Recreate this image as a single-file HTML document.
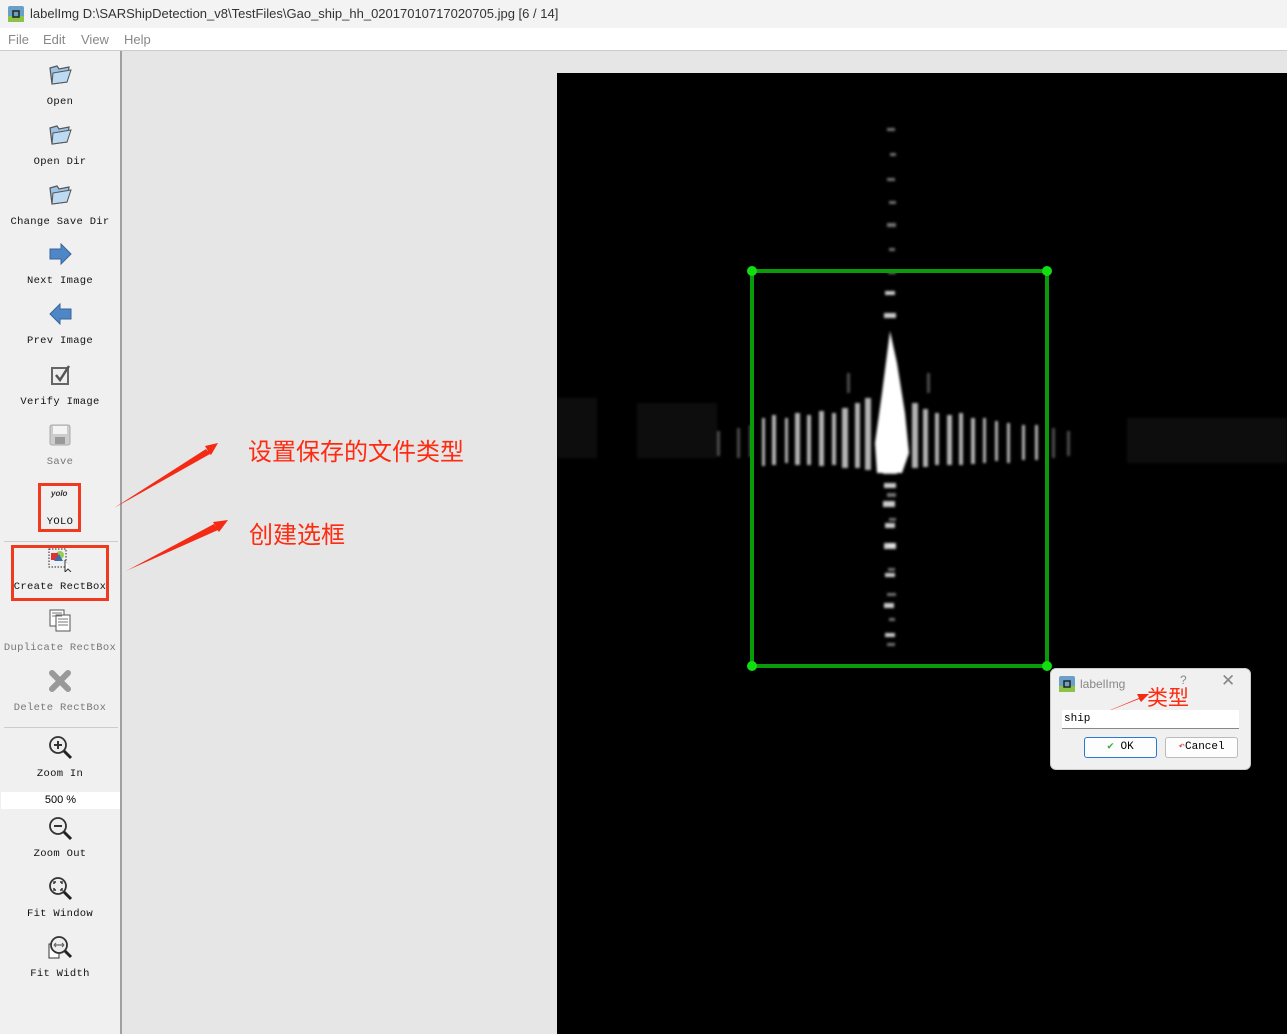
<!DOCTYPE html>
<html><head><meta charset="utf-8"><style>
*{margin:0;padding:0;box-sizing:border-box}
body{width:1287px;height:1034px;overflow:hidden;background:#e6e6e6;font-family:"Liberation Sans",sans-serif;position:relative}
.title{position:absolute;left:0;top:0;width:1287px;height:28px;background:#f3f3f3;font-size:13px;color:#333}
.title span{position:absolute;left:30px;top:6px}
.menu{position:absolute;left:0;top:28px;width:1287px;height:23px;background:#fff;border-bottom:1px solid #ccc;font-size:13px;color:#888}
.menu span{position:absolute;top:4px}
.tb{position:absolute;left:0;top:51px;width:122px;height:983px;background:#f0f0f0;border-right:2px solid #a0a0a0}
.lbl{position:absolute;width:120px;text-align:center;font-family:"Liberation Mono",monospace;font-size:10.5px;color:#111;letter-spacing:0.3px}
.dis{color:#777}
.ic{position:absolute}
.sep{position:absolute;left:4px;width:114px;height:1px;background:#ccc}
.red{position:absolute;border:3px solid #f03a20}
.ann{position:absolute;color:#ff2a10;font-family:"Liberation Sans","Noto Sans CJK SC",sans-serif;font-size:24px}
.img{position:absolute;left:557px;top:73px;width:730px;height:961px;background:#000}
.dlg{position:absolute;left:1050px;top:668px;width:201px;height:102px;background:#f0f0f0;border-radius:6px;border:1px solid #ccc}
.btn{position:absolute;height:21px;font-family:"Liberation Mono",monospace;font-size:11px;background:#fdfdfd;border:1px solid #bbb;border-radius:3px;text-align:center;line-height:19px}
</style></head><body>
<div class="title">
<svg style="position:absolute;left:8px;top:6px" width="16" height="16"><rect x="0" y="0" width="16" height="16" rx="2" fill="#6aa0c8"/><rect x="0" y="10" width="16" height="6" fill="#8bc34a"/><rect x="5" y="5" width="6" height="6" fill="none" stroke="#222" stroke-width="1.5"/></svg>
<span>labelImg D:\SARShipDetection_v8\TestFiles\Gao_ship_hh_02017010717020705.jpg [6 / 14]</span></div>
<div class="menu"><span style="left:8px">File</span><span style="left:43px">Edit</span><span style="left:81px">View</span><span style="left:124px">Help</span></div>
<div class="tb"></div>
<svg class="ic" style="left:47px;top:62px" width="26" height="24"><path d="M3 6 L10 4 L12 7 L22 5 L20 20 L5 22 Z" fill="#9cc3e6" stroke="#555" stroke-width="1.2"/><path d="M6 11 L24 8 L20 20 L5 22Z" fill="#bcdaf2" stroke="#555" stroke-width="1"/></svg>
<svg class="ic" style="left:47px;top:122px" width="26" height="24"><path d="M3 6 L10 4 L12 7 L22 5 L20 20 L5 22 Z" fill="#9cc3e6" stroke="#555" stroke-width="1.2"/><path d="M6 11 L24 8 L20 20 L5 22Z" fill="#bcdaf2" stroke="#555" stroke-width="1"/></svg>
<svg class="ic" style="left:47px;top:182px" width="26" height="24"><path d="M3 6 L10 4 L12 7 L22 5 L20 20 L5 22 Z" fill="#9cc3e6" stroke="#555" stroke-width="1.2"/><path d="M6 11 L24 8 L20 20 L5 22Z" fill="#bcdaf2" stroke="#555" stroke-width="1"/></svg>
<svg class="ic" style="left:49px;top:243px" width="24" height="22"><path d="M1 6 H12 V1 L22 11 L12 21 V16 H1 Z" fill="#4f86c6" stroke="#37659c"/></svg>
<svg class="ic" style="left:48px;top:303px" width="24" height="22"><path d="M23 6 H12 V1 L2 11 L12 21 V16 H23 Z" fill="#4f86c6" stroke="#37659c"/></svg>
<svg class="ic" style="left:50px;top:364px" width="22" height="22"><rect x="2" y="4" width="16" height="16" fill="#eee" stroke="#666" stroke-width="2"/><path d="M6 11 L10 16 L19 2" fill="none" stroke="#555" stroke-width="2.5"/></svg>
<svg class="ic" style="left:49px;top:424px" width="22" height="22"><rect x="1" y="1" width="20" height="20" rx="2" fill="#ccc" stroke="#aaa"/><rect x="4" y="2" width="14" height="8" fill="#f4f4f4"/><rect x="6" y="13" width="10" height="7" fill="#999"/></svg>
<div style="position:absolute;left:51px;top:489px;font:italic bold 8px 'Liberation Sans',sans-serif;color:#333">yolo</div>
<svg class="ic" style="left:48px;top:548px" width="26" height="24"><rect x="1" y="1" width="17" height="18" fill="none" stroke="#222" stroke-dasharray="1.5 1.5"/><circle cx="12" cy="7" r="4" fill="#9c5" /><rect x="3" y="5" width="7" height="7" fill="#d33"/><path d="M6 13 L11 6 L15 13Z" fill="#3a6cb0"/><path d="M17 12 L17 24 L20 21 L23 24" fill="#fff" stroke="#333"/></svg>
<svg class="ic" style="left:48px;top:608px" width="26" height="24"><rect x="2" y="2" width="14" height="16" fill="#fff" stroke="#555"/><rect x="8" y="7" width="14" height="16" fill="#fff" stroke="#555"/><path d="M10 11h10M10 14h10M10 17h10M4 5h10M4 8h10" stroke="#777"/></svg>
<svg class="ic" style="left:48px;top:669px" width="24" height="24"><path d="M4 4 L20 20 M20 4 L4 20" stroke="#999" stroke-width="6" stroke-linecap="round"/></svg>
<svg class="ic" style="left:48px;top:735px" width="26" height="26"><circle cx="10" cy="10" r="8" fill="#eee" stroke="#333" stroke-width="1.8"/><path d="M16 16 L23 23" stroke="#222" stroke-width="3"/><path d="M6 10h8M10 6v8" stroke="#333" stroke-width="2"/></svg>
<svg class="ic" style="left:48px;top:816px" width="26" height="26"><circle cx="10" cy="10" r="8" fill="#eee" stroke="#333" stroke-width="1.8"/><path d="M16 16 L23 23" stroke="#222" stroke-width="3"/><path d="M6 10h8" stroke="#333" stroke-width="2"/></svg>
<svg class="ic" style="left:48px;top:876px" width="26" height="26"><circle cx="10" cy="10" r="8" fill="#eee" stroke="#333" stroke-width="1.8"/><path d="M16 16 L23 23" stroke="#222" stroke-width="3"/><path d="M6 8V6h2M12 6h2v2M14 12v2h-2M8 14H6v-2" stroke="#333" stroke-width="1.5" fill="none"/></svg>
<svg class="ic" style="left:47px;top:935px" width="26" height="26"><rect x="2" y="9" width="10" height="14" fill="#fff" stroke="#333"/><circle cx="12" cy="10" r="8" fill="#eee" stroke="#333" stroke-width="1.8"/><path d="M18 16 L24 22" stroke="#222" stroke-width="3"/><path d="M7 10h10M7 10l2-2M7 10l2 2M17 10l-2-2M17 10l-2 2" stroke="#666" stroke-width="1.2"/></svg>
<div class="lbl" style="top:96px">Open</div>
<div class="lbl" style="top:156px">Open Dir</div>
<div class="lbl" style="top:216px">Change Save Dir</div>
<div class="lbl" style="top:275px">Next Image</div>
<div class="lbl" style="top:335px">Prev Image</div>
<div class="lbl" style="top:396px">Verify Image</div>
<div class="lbl dis" style="top:456px">Save</div>
<div class="lbl" style="top:516px">YOLO</div>
<div class="sep" style="top:541px"></div>
<div class="lbl" style="top:581px">Create RectBox</div>
<div class="lbl dis" style="top:642px">Duplicate RectBox</div>
<div class="lbl dis" style="top:702px">Delete RectBox</div>
<div class="sep" style="top:727px"></div>
<div class="lbl" style="top:768px">Zoom In</div>
<div style="position:absolute;left:1px;top:792px;width:119px;height:17px;background:#fff;font-size:11px;text-align:center;line-height:17px">500 %</div>
<div class="lbl" style="top:848px">Zoom Out</div>
<div class="lbl" style="top:908px">Fit Window</div>
<div class="lbl" style="top:968px">Fit Width</div>
<div class="red" style="left:38px;top:483px;width:43px;height:49px"></div>
<div class="red" style="left:11px;top:545px;width:98px;height:56px"></div>
<svg style="position:absolute;left:0;top:0" width="1287" height="1034">
<path d="M114 508 L208 451 L205 446 L218 443 L211 455 L208 452 Z" fill="#f52a15"/>
<path d="M114 508 L206 449 L210 454 Z" fill="#f52a15"/>
<path d="M126 571 L216 527 L213 522 L228 520 L219 532 L216 528 Z" fill="#f52a15"/>
<path d="M126 571 L214 524 L218 530 Z" fill="#f52a15"/>
</svg>
<div class="ann" style="left:248px;top:432px">设置保存的文件类型</div>
<div class="ann" style="left:249px;top:515px">创建选框</div>
<div class="img"></div>
<svg style="position:absolute;left:557px;top:73px" width="730" height="961">
<defs><filter id="b"><feGaussianBlur stdDeviation="1.2"/></filter></defs>
<g fill="#fff" filter="url(#b)">
<g opacity="0.45">
<rect x="330" y="55" width="8" height="3"/><rect x="333" y="80" width="6" height="3"/><rect x="330" y="105" width="8" height="3"/><rect x="332" y="128" width="7" height="3"/><rect x="330" y="150" width="9" height="4"/><rect x="332" y="175" width="6" height="3"/><rect x="331" y="198" width="8" height="3"/>
<rect x="330" y="420" width="9" height="4"/><rect x="332" y="445" width="7" height="3"/><rect x="330" y="470" width="8" height="4"/><rect x="331" y="495" width="7" height="3"/><rect x="330" y="520" width="9" height="3"/><rect x="332" y="545" width="6" height="3"/><rect x="330" y="570" width="8" height="3"/>
</g>
<g opacity="0.8">
<rect x="328" y="218" width="10" height="4"/><rect x="327" y="240" width="12" height="5"/><rect x="326" y="395" width="14" height="6"/><rect x="327" y="410" width="12" height="5"/><rect x="326" y="428" width="12" height="6"/><rect x="328" y="450" width="10" height="5"/><rect x="327" y="470" width="12" height="6"/><rect x="328" y="500" width="10" height="4"/><rect x="327" y="530" width="10" height="5"/><rect x="328" y="560" width="10" height="4"/>
</g>
<path d="M333 258 L340 290 L348 340 L352 380 L345 400 L320 400 L318 370 L325 320 Z"/>
<g opacity="0.7">
<rect x="205" y="345" width="3" height="48"/><rect x="215" y="342" width="4" height="50"/><rect x="228" y="345" width="3" height="45"/><rect x="238" y="340" width="5" height="52"/><rect x="250" y="342" width="4" height="50"/><rect x="262" y="338" width="5" height="55"/><rect x="275" y="340" width="4" height="52"/><rect x="285" y="335" width="6" height="60"/><rect x="298" y="330" width="5" height="65"/><rect x="308" y="325" width="6" height="72"/>
<rect x="355" y="330" width="6" height="65"/><rect x="366" y="336" width="5" height="58"/><rect x="378" y="340" width="4" height="52"/><rect x="390" y="342" width="5" height="50"/><rect x="402" y="340" width="4" height="52"/><rect x="414" y="345" width="4" height="46"/><rect x="426" y="345" width="3" height="45"/><rect x="438" y="348" width="3" height="40"/><rect x="450" y="350" width="3" height="40"/><rect x="465" y="352" width="3" height="35"/><rect x="478" y="352" width="3" height="35"/>
</g>
<g opacity="0.3">
<rect x="180" y="355" width="3" height="30"/><rect x="192" y="352" width="3" height="32"/><rect x="160" y="358" width="3" height="25"/><rect x="495" y="355" width="3" height="30"/><rect x="510" y="358" width="3" height="25"/><rect x="290" y="300" width="3" height="20"/><rect x="370" y="300" width="3" height="20"/>
</g>
<g opacity="0.05">
<rect x="0" y="325" width="40" height="60"/><rect x="80" y="330" width="80" height="55"/><rect x="570" y="345" width="160" height="45"/>
</g>
</g>
<g stroke="#0a9a0a" stroke-width="4" fill="none"><rect x="195" y="198" width="295" height="395"/></g>
<g fill="#11dd11"><circle cx="195" cy="198" r="5"/><circle cx="490" cy="198" r="5"/><circle cx="195" cy="593" r="5"/><circle cx="490" cy="593" r="5"/></g>
</svg>
<div class="dlg">
<svg style="position:absolute;left:8px;top:7px" width="16" height="16"><rect x="0" y="0" width="16" height="16" rx="2" fill="#6aa0c8"/><rect x="0" y="10" width="16" height="6" fill="#8bc34a"/><rect x="5" y="5" width="6" height="6" fill="none" stroke="#222" stroke-width="1.5"/></svg>
<div style="position:absolute;left:29px;top:8px;font-size:12px;color:#888">labelImg</div>
<div style="position:absolute;left:129px;top:4px;font-size:12px;color:#888">?</div>
<div style="position:absolute;left:170px;top:2px;font-size:17px;color:#888">✕</div>
<div class="ann" style="left:96px;top:13px;font-size:21px">类型</div>
<svg style="position:absolute;left:40px;top:20px" width="60" height="30"><path d="M5 27 L48 9 L46 5 L58 5 L50 13 L48 10 Z" fill="#f52a15"/></svg>
<div style="position:absolute;left:11px;top:41px;width:177px;height:19px;background:#fff;border-bottom:1px solid #888;font-family:'Liberation Mono',monospace;font-size:11px;padding:3px 2px">ship</div>
<div class="btn" style="left:33px;top:68px;width:73px;border:1px solid #2a7ad5"><span style="color:#4a4">✔</span> OK</div>
<div class="btn" style="left:114px;top:68px;width:73px"><span style="color:#d44">↶</span>Cancel</div>
</div>
</body></html>
